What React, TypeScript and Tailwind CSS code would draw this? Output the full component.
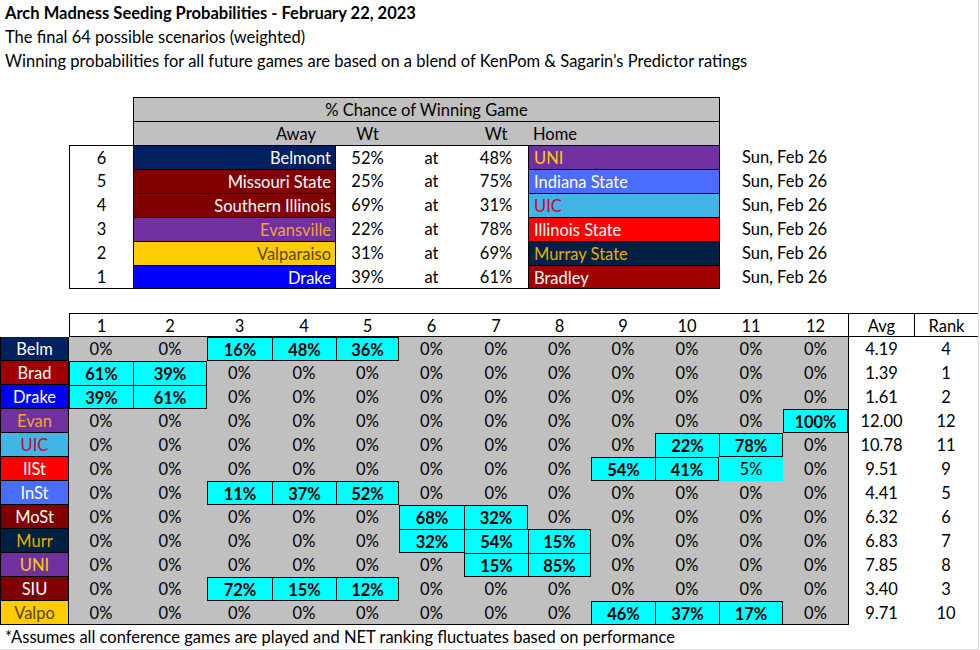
import clsx from "clsx";

type Game = {
  seed: number;
  away: string;
  awayCls: string;
  awayWt: string;
  homeWt: string;
  home: string;
  homeCls: string;
};

const games: Game[] = [
  { seed: 6, away: "Belmont", awayCls: "bg-[#002060] text-white", awayWt: "52%", homeWt: "48%", home: "UNI", homeCls: "bg-[#7030a0] text-[#ffcc00]" },
  { seed: 5, away: "Missouri State", awayCls: "bg-[#800000] text-white", awayWt: "25%", homeWt: "75%", home: "Indiana State", homeCls: "bg-[#4a6cff] text-white" },
  { seed: 4, away: "Southern Illinois", awayCls: "bg-[#800000] text-white", awayWt: "69%", homeWt: "31%", home: "UIC", homeCls: "bg-[#41b6e6] text-[#d50032]" },
  { seed: 3, away: "Evansville", awayCls: "bg-[#7030a0] text-[#f7a233]", awayWt: "22%", homeWt: "78%", home: "Illinois State", homeCls: "bg-[#ff0000] text-white" },
  { seed: 2, away: "Valparaiso", awayCls: "bg-[#ffcc00] text-[#5c4400]", awayWt: "31%", homeWt: "69%", home: "Murray State", homeCls: "bg-[#002144] text-[#ecac00]" },
  { seed: 1, away: "Drake", awayCls: "bg-[#0000ff] text-white", awayWt: "39%", homeWt: "61%", home: "Bradley", homeCls: "bg-[#a00000] text-white" },
];

type Team = {
  label: string;
  cls: string;
  hits: Record<number, string>;
  soft?: Record<number, string>;
  avg: string;
  rank: string;
};

const teams: Team[] = [
  { label: "Belm", cls: "bg-[#002060] text-white", hits: { 3: "16%", 4: "48%", 5: "36%" }, avg: "4.19", rank: "4" },
  { label: "Brad", cls: "bg-[#a00000] text-white", hits: { 1: "61%", 2: "39%" }, avg: "1.39", rank: "1" },
  { label: "Drake", cls: "bg-[#0000ff] text-white", hits: { 1: "39%", 2: "61%" }, avg: "1.61", rank: "2" },
  { label: "Evan", cls: "bg-[#7030a0] text-[#f7a233]", hits: { 12: "100%" }, avg: "12.00", rank: "12" },
  { label: "UIC", cls: "bg-[#41b6e6] text-[#d50032]", hits: { 10: "22%", 11: "78%" }, avg: "10.78", rank: "11" },
  { label: "IlSt", cls: "bg-[#ff0000] text-white", hits: { 9: "54%", 10: "41%" }, soft: { 11: "5%" }, avg: "9.51", rank: "9" },
  { label: "InSt", cls: "bg-[#4a6cff] text-white", hits: { 3: "11%", 4: "37%", 5: "52%" }, avg: "4.41", rank: "5" },
  { label: "MoSt", cls: "bg-[#800000] text-white", hits: { 6: "68%", 7: "32%" }, avg: "6.32", rank: "6" },
  { label: "Murr", cls: "bg-[#002144] text-[#ecac00]", hits: { 6: "32%", 7: "54%", 8: "15%" }, avg: "6.83", rank: "7" },
  { label: "UNI", cls: "bg-[#7030a0] text-[#ffcc00]", hits: { 7: "15%", 8: "85%" }, avg: "7.85", rank: "8" },
  { label: "SIU", cls: "bg-[#800000] text-white", hits: { 3: "72%", 4: "15%", 5: "12%" }, avg: "3.40", rank: "3" },
  { label: "Valpo", cls: "bg-[#ffcc00] text-[#5c4400]", hits: { 9: "46%", 10: "37%", 11: "17%" }, avg: "9.71", rank: "10" },
];

// seed columns 1..12, pixel widths to line up with the sheet
const colW = [
  "w-[64px]", "w-[74px]", "w-[65px]", "w-[64px]", "w-[63px]", "w-[65px]",
  "w-[64px]", "w-[63px]", "w-[64px]", "w-[64px]", "w-[64px]", "w-[65px]",
];
const seeds = [1, 2, 3, 4, 5, 6, 7, 8, 9, 10, 11, 12];

const has = (r: number, c: number) => !!teams[r]?.hits[c];

export default function App() {
  return (
    <div className="w-[979px] h-[650px] bg-white border-r border-b border-[#d9d9d9] pt-px text-[16.5px] text-black font-['Lato','Noto_Sans',sans-serif] overflow-hidden">
      <div className="h-6 leading-6 pl-[5px] font-bold">
        Arch Madness Seeding Probabilities - February 22, 2023
      </div>
      <div className="h-6 leading-6 pl-[5px]">The final 64 possible scenarios (weighted)</div>
      <div className="h-6 leading-6 pl-[5px]">
        Winning probabilities for all future games are based on a blend of KenPom &amp; Sagarin's Predictor ratings
      </div>
      <div className="h-6" />

      {/* game table */}
      <div className="flex h-6">
        <div className="w-[133px]" />
        <div className="w-[587px] bg-[#c0c0c0] border-x border-t border-black leading-6 text-center">
          % Chance of Winning Game
        </div>
      </div>
      <div className="flex h-6">
        <div className="w-[133px]" />
        <div className="w-[587px] flex bg-[#c0c0c0] border-x border-t border-black leading-6">
          <div className="w-[202px] text-right pr-[20px]">Away</div>
          <div className="w-[63px] text-center">Wt</div>
          <div className="w-[65px]" />
          <div className="w-[64px] text-center">Wt</div>
          <div className="flex-1 pl-[5px]">Home</div>
        </div>
      </div>
      {games.map((g, i) => (
        <div key={g.seed} className="flex h-6 leading-6">
          <div className="w-[69px]" />
          <div
            className={clsx(
              "w-[64px] text-center border-l border-black",
              i === 0 && "border-t",
              i === games.length - 1 && "border-b"
            )}
          >
            {g.seed}
          </div>
          <div className={clsx("w-[203px] text-right pr-[4px] border-l border-r border-t border-black", i === games.length - 1 && "border-b", g.awayCls)}>
            {g.away}
          </div>
          <div className={clsx("w-[63px] text-center border-black", i === 0 && "border-t", i === games.length - 1 && "border-b")}>{g.awayWt}</div>
          <div className={clsx("w-[65px] text-center border-black", i === 0 && "border-t", i === games.length - 1 && "border-b")}>at</div>
          <div className={clsx("w-[64px] text-center border-black", i === 0 && "border-t", i === games.length - 1 && "border-b")}>{g.homeWt}</div>
          <div className={clsx("w-[192px] pl-[5px] border-l border-r border-t border-black", i === games.length - 1 && "border-b", g.homeCls)}>
            {g.home}
          </div>
          <div className="w-[129px] text-center">Sun, Feb 26</div>
        </div>
      ))}
      <div className="h-6" />

      {/* seeding grid */}
      <div className="flex h-6 leading-6">
        <div className="w-[69px]" />
        {seeds.map((s, c) => (
          <div key={s} className={clsx(colW[c], "text-center border-t border-b border-black", c === 0 && "border-l")}>
            {s}
          </div>
        ))}
        <div className="w-[66px] text-center border-t border-b border-l border-black">Avg</div>
        <div className="flex-1 text-center border-t border-b border-l border-black">Rank</div>
      </div>
      {teams.map((t, r) => (
        <div key={t.label} className="flex h-6 leading-6">
          <div className={clsx("w-[69px] text-center border-l border-r border-b border-black", t.cls)}>{t.label}</div>
          {seeds.map((s, c) => {
            const hit = t.hits[s];
            const soft = t.soft?.[s];
            const last = r === teams.length - 1;
            return (
              <div
                key={s}
                className={clsx(
                  colW[c],
                  "text-center border-black",
                  hit || soft ? "bg-[#00ffff]" : "bg-[#c0c0c0]",
                  hit && "font-bold border-t border-l",
                  hit && !has(r, s + 1) && "border-r",
                  hit && !has(r + 1, s) && "border-b",
                  !hit && last && "border-b"
                )}
              >
                {hit || soft || "0%"}
              </div>
            );
          })}
          <div className="w-[66px] text-center border-l border-black">{t.avg}</div>
          <div className="flex-1 text-center">{t.rank}</div>
        </div>
      ))}
      <div className="h-6 leading-6 pl-[5px]">
        *Assumes all conference games are played and NET ranking fluctuates based on performance
      </div>
    </div>
  );
}
